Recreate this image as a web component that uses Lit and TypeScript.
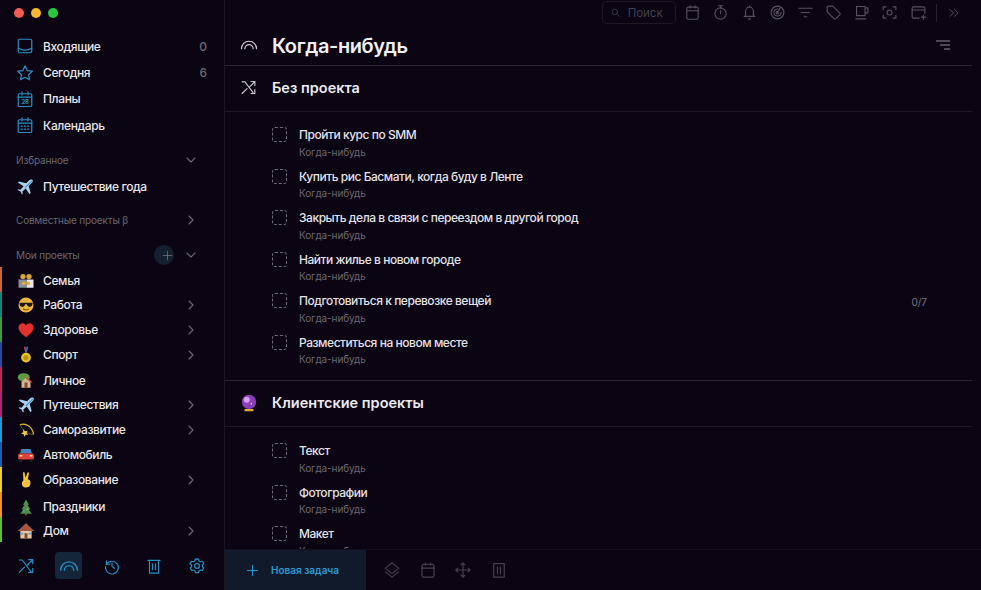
import { LitElement, html, css, svg } from "lit";
import { customElement } from "lit/decorators.js";

const ic = (body: unknown, size = 20, vb = 24) => html`<svg class="ico" width=${size} height=${size} viewBox="0 0 ${vb} ${vb}" fill="none" stroke="currentColor" stroke-width="1.6" stroke-linecap="round" stroke-linejoin="round">${body}</svg>`;

const I = {
  inbox: svg`<rect x="3" y="3" width="18" height="18" rx="2"/><path d="M3 15c3 0 3 2.500 9 2.500S18 15 21 15"/>`,
  star: svg`<path d="M12 2.500l2.900 6.300 6.900.8-5.100 4.700 1.400 6.800-6.100-3.400-6.100 3.400 1.400-6.800L2.200 9.600l6.900-.8z"/>`,
  plans: svg`<rect x="3" y="5" width="18" height="17" rx="1.500"/><path d="M3 9.500h18M8 2.500v4M16 2.500v4"/><text x="12" y="19" font-size="8" text-anchor="middle" fill="currentColor" stroke="none" font-family="Inter" font-weight="700">28</text>`,
  cal: svg`<rect x="3" y="5" width="18" height="17" rx="1.500"/><path d="M3 9.500h18M8 2.500v4M16 2.500v4M7 13.500h1.500M11.200 13.500h1.500M15.500 13.500H17M7 17.500h1.500M11.200 17.500h1.500M15.500 17.500H17"/>`,
  calPlain: svg`<rect x="4" y="4.500" width="16" height="17" rx="2"/><path d="M4 9.500h16M8.500 2.500v3M15.500 2.500v3"/>`,
  chevD: svg`<path d="M6 9l6 6 6-6"/>`,
  chevR: svg`<path d="M9 6l6 6-6 6"/>`,
  plus: svg`<path d="M12 4v16M4 12h16"/>`,
  shuffle: svg`<path d="M3 4l4 0 12 16M21 20.500h-5.500M21 20.500V15M21 3.500h-5.500M21 3.500V9M21 3.500l-7.500 7.500M3 20.500l7-7"/>`,
  arcs: svg`<path d="M2 17a10 10 0 0 1 20 0M6.500 17a5.500 5.500 0 0 1 11 0"/>`,
  history: svg`<path d="M4.500 5v4.500H9"/><path d="M4.800 9.500A8.500 8.500 0 1 1 3.500 13"/><path d="M12 8v4.500l3.500 2.500"/>`,
  trash: svg`<path d="M4 4.500h16M6 4.500V21.500h12V4.500M10 9v8M14 9v8"/>`,
  gear: svg`<path d="M12 2.500l2 .3.800 2.500 1.700 1 2.600-.6 1.900 3.200-1.800 1.900v2l1.800 1.900-1.900 3.200-2.600-.6-1.700 1-.8 2.500h-4l-.8-2.500-1.700-1-2.600.6-1.900-3.200 1.800-1.900v-2L2.700 8.900l1.900-3.200 2.600.6 1.700-1 .8-2.500z"/><circle cx="12" cy="12" r="3.200"/>`,
  search: svg`<circle cx="10.500" cy="10.500" r="6"/><path d="M15 15l5.500 5.500"/>`,
  timer: svg`<circle cx="12" cy="13.500" r="8"/><path d="M9 2.500h6M12 2.500v3M12 9.500v4h0"/>`,
  bell: svg`<path d="M6.500 17.500V10a5.500 5.500 0 0 1 11 0v7.500M4.500 17.500h15M10.500 21h3M12 2.500v2"/>`,
  radar: svg`<path d="M12 3a9 9 0 1 0 9 9"/><path d="M12 7a5 5 0 1 0 5 5"/><path d="M12 3c5 0 9 4 9 9M12 10.500a1.800 1.800 0 1 0 1.800 1.800M12 12l3.500-6"/>`,
  filter: svg`<path d="M2.500 6h19M6.500 12h11M10 18h4"/>`,
  tag: svg`<path d="M3 4.500A1.500 1.500 0 0 1 4.500 3H11l10 10a1.500 1.500 0 0 1 0 2l-6 6a1.500 1.500 0 0 1-2 0L3 11z"/>`,
  cup: svg`<path d="M5 3.500h12v13H5zM17 5.500h4v7h-4M4 21h14"/>`,
  focus: svg`<path d="M3 8V4h4M17 4h4v4M21 16v4h-4M7 20H3v-4"/><circle cx="12" cy="12" r="3.500"/>`,
  addWin: svg`<path d="M13 20H5a2 2 0 0 1-2-2V6a2 2 0 0 1 2-2h14a2 2 0 0 1 2 2v7M3 8.500h18M19 15.500v6M16 18.500h6"/>`,
  dblR: svg`<path d="M5 6l6 6-6 6M13 6l6 6-6 6"/>`,
  sortLines: svg`<path d="M2 6h20M8 12h14M14 18h8"/>`,
  layers: svg`<path d="M12 2.500l9 7-9 7-9-7zM3 14.500l9 7 9-7"/>`,
  move: svg`<path d="M12 2.500v19M2.500 12h19M9.500 5L12 2.500 14.500 5M9.500 19l2.500 2.500 2.500-2.500M5 9.500L2.500 12 5 14.500M19 9.500l2.500 2.500-2.500 2.500"/>`,
  bin: svg`<path d="M5 3.500h14v18H5zM10 8v9M14 8v9"/>`,
};

const emoji: Record<string, unknown> = {
  plane: svg`<path d="M22 2.500c-1.500-1.200-3.500-.5-5 1L13.500 7 4 4.500 2.500 6l7.500 5-4 4.500-3-.5L2 16l4 2 2 4 1-1-.5-3 4.500-4 5 7.500 1.500-1.500L17 10.500l3.500-3.500c1.500-1.500 2.700-3.300 1.500-4.500z" fill="#a9d0ee"/><path d="M20.500 3.500l-9 9 1 1 9-9z" fill="#3f8fd0"/>`,
  family: svg`<circle cx="8" cy="6" r="3.500" fill="#d9a63a"/><circle cx="16" cy="6" r="3.500" fill="#d9a63a"/><rect x="2" y="10" width="11" height="11" fill="#8a8f99"/><rect x="13" y="10" width="9" height="11" fill="#e8e8ee"/><circle cx="9" cy="15" r="2.500" fill="#e0b040"/><circle cx="15" cy="15" r="2.500" fill="#e0b040"/>`,
  cool: svg`<circle cx="12" cy="12" r="10" fill="#f0b73c"/><path d="M3 9h18l-1 4c-2 2-5 2-6 0l-1-2h-2l-1 2c-1 2-4 2-6 0z" fill="#1a1a1a"/><path d="M8 17c3 2 6 2 8 0" stroke="#7a4a10" stroke-width="1.400" fill="none"/>`,
  heart: svg`<path d="M12 21.500C5 16 2 12.500 2 8.500A5.500 5.500 0 0 1 12 5.500 5.500 5.500 0 0 1 22 8.500c0 4-3 7.500-10 13z" fill="#e0312f"/>`,
  medal: svg`<path d="M9 1h2.500l1.500 8H11z" fill="#c43b3b"/><path d="M15 1h-2.500L12 9h1z" fill="#4a6fd0"/><circle cx="12" cy="15.500" r="6.500" fill="#e8c62f"/><circle cx="12" cy="15.500" r="3.500" fill="#b99616"/>`,
  hut: svg`<ellipse cx="9" cy="7" rx="8" ry="5.500" fill="#5f9a45"/><path d="M6 21v-8l6-5 6 5v8z" fill="#d8b692"/><rect x="10" y="14" width="4" height="7" fill="#7a4f32"/><path d="M12 6l9 8h-3l-6-5z" fill="#c45a4a"/>`,
  comet: svg`<path d="M4 5c8-3 17 3 18 13" stroke="#e6b733" stroke-width="1.600" fill="none"/><path d="M4 5c3 6 9 13 18 13" stroke="#8a6a1c" stroke-width="1" fill="none"/><path d="M8 11l2.500 2.500L14 13l-1.200 3 2.300 2.500-3.300-.4-2 3-1-3.300-3.500-1 3-1.800z" fill="#f4cd45"/>`,
  car: svg`<path d="M6 4h12l2 6H4z" fill="#4a7fc0"/><rect x="1.500" y="10" width="21" height="8" rx="2" fill="#e0403c"/><rect x="3" y="18" width="4" height="3" fill="#222"/><rect x="17" y="18" width="4" height="3" fill="#222"/><rect x="3.500" y="12" width="3.500" height="2" fill="#fbe28a"/><rect x="17" y="12" width="3.500" height="2" fill="#fbe28a"/>`,
  peace: svg`<path d="M8 1.500l2 0 1.500 7.500L14 2h2.200l-1.700 9c2.500.5 3.500 2 3.500 5 0 4-2.500 6-6 6s-5.500-2-5.500-5c0-2 .5-3 2-4.500z" fill="#f4c23d"/>`,
  tree: svg`<path d="M12 2l4 7h-2l4 6h-2.500l4 6H4.500l4-6H6l4-6H8z" fill="#4b8f4a"/><rect x="10.500" y="20" width="3" height="3" fill="#7a4f32"/><circle cx="11" cy="10" r="1" fill="#e04040"/><circle cx="14" cy="15" r="1" fill="#ecc53a"/><circle cx="9" cy="17" r="1" fill="#5aa0e0"/>`,
  house: svg`<path d="M12 2L1.500 12h3v10h15V12h3z" fill="#e8c7a0"/><path d="M12 2L1.500 12h21z" fill="#a8553f"/><rect x="10" y="15" width="4" height="7" fill="#7a4f32"/><rect x="5.500" y="14" width="3" height="3" fill="#68a8d8"/><rect x="15.500" y="14" width="3" height="3" fill="#68a8d8"/>`,
  ball: svg`<circle cx="12" cy="10.500" r="9.500" fill="#8a3fb8"/><circle cx="9" cy="7.500" r="4" fill="#d89cf0"/><circle cx="15" cy="13" r="1" fill="#f5e0ff"/><path d="M6 20h12v3H6z" fill="#e3a83a"/>`,
};

const emo = (k: string, size = 18) => html`<svg class="emo" width=${size} height=${size} viewBox="0 0 24 24">${emoji[k]}</svg>`;

const NAV = [
  ["inbox", "Входящие", "0"],
  ["star", "Сегодня", "6"],
  ["plans", "Планы", ""],
  ["cal", "Календарь", ""],
] as const;

const PROJECTS = [
  { e: "family", n: "Семья", c: "#c8683a", more: false, cls: "low" },
  { e: "cool", n: "Работа", c: "#14857a", more: true, cls: "" },
  { e: "heart", n: "Здоровье", c: "#3f9a45", more: true, cls: "" },
  { e: "medal", n: "Спорт", c: "#2a4aa0", more: true, cls: "" },
  { e: "hut", n: "Личное", c: "#c0245a", more: false, cls: "low" },
  { e: "plane", n: "Путешествия", c: "#b81f72", more: true, cls: "" },
  { e: "comet", n: "Саморазвитие", c: "#1e9ad8", more: true, cls: "" },
  { e: "car", n: "Автомобиль", c: "#1a5fb0", more: false, cls: "" },
  { e: "peace", n: "Образование", c: "#ecd02f", more: true, cls: "" },
  { e: "tree", n: "Праздники", c: "#f0902a", more: false, cls: "lower" },
  { e: "house", n: "Дом", c: "#5cc03a", more: true, cls: "low" },
];

const TOOLS = ["calPlain", "timer", "bell", "radar", "filter", "tag", "cup", "focus", "addWin"] as const;

@customElement("app-root")
export class AppRoot extends LitElement {
  static styles = css`
    :host { display: block; width: 981px; height: 590px; overflow: hidden; background: #0a0413; color: #eceaf0; font-family: Inter, "Noto Sans", sans-serif; }
    * { box-sizing: border-box; }
    svg { display: block; flex: none; }
    .app { display: flex; height: 590px; }
    .side { width: 225px; flex: none; border-right: 1px solid #1b1622; display: flex; flex-direction: column; height: 590px; }
    .lights { display: flex; gap: 7px; padding: 8px 0 0 14px; height: 33px; }
    .lights i { width: 10px; height: 10px; border-radius: 50%; }
    .row { display: flex; align-items: center; height: 26.400px; padding-left: 16px; font-size: 12px; letter-spacing: -0.37px; font-weight: 500; color: #e9e7ec; }
    .row .ico { color: #2b8fc4; margin-right: 9px; width: 18px; height: 18px; }
    .row .count { margin-left: auto; margin-right: 17px; color: #6f6b76; font-size: 12px; letter-spacing: 0; }
    .group { display: flex; align-items: center; height: 24px; padding-left: 16px; padding-right: 25px; font-size: 10px; letter-spacing: -0.15px; color: #6b6772; }
    .group .ico { margin-left: auto; color: #6d6974; }
    .g1 { margin-top: 9px; }
    .g2 { margin-top: 8.500px; }
    .g3 { margin-top: 11px; }
    .addbtn { width: 20px; height: 20px; border-radius: 50%; background: #14202f; color: #2fa2dc; display: flex; align-items: center; justify-content: center; margin-left: auto; margin-right: 9px; }
    .addbtn + .ico { margin-left: 0; }
    .fav .emo { margin-right: 9px; }
    .row.fav { margin-top: 2px; }
    .proj { display: flex; align-items: center; height: 25px; padding-left: 15px; padding-right: 25px; font-size: 12px; letter-spacing: -0.37px; font-weight: 500; color: #e9e7ec; border-left: 2px solid; }
    .proj .emo { margin-right: 8px; }
    .proj .ico { margin-left: auto; color: #6d6974; }
    .proj.low { padding-top: 2px; }
    .proj.lower { padding-top: 4px; }
    .side-foot { margin-top: auto; height: 46px; display: flex; align-items: center; justify-content: space-between; padding: 0 13.500px 3px 12.500px; }
    .side-foot span { width: 27px; height: 27px; border-radius: 4px; display: flex; align-items: center; justify-content: center; color: #2b8fc4; }
    .side-foot span.on { background: #14273a; }
    .main { flex: 1; min-width: 0; display: flex; flex-direction: column; height: 590px; }
    .tools { height: 25px; display: flex; align-items: center; justify-content: flex-end; padding-right: 20px; color: #55515c; gap: 11.200px; flex: none; }
    .search { width: 74px; height: 23px; border: 1px solid #1d1925; border-radius: 5px; display: flex; align-items: center; padding-left: 7px; gap: 7px; font-size: 11.500px; color: #45414c; margin-right: -2.700px; }
    .sep { width: 1px; height: 18px; background: #25212c; margin: 0 -1px 0 -2px; }
    .title { height: 41px; margin-right: 9px; display: flex; align-items: center; padding: 1px 21px 0 15px; border-bottom: 1px solid #2a2630; font-size: 20px; letter-spacing: -0.4px; font-weight: 600; flex: none; color: #f2f0f4; }
    .title .ico { margin: 0 14px 2px 0; color: #d0cdd4; }
    .title .ico:last-child { margin: 0 0 2px auto; color: #8f8b95; }
    .scroll { flex: 1; min-height: 0; overflow: hidden; margin-right: 9px; }
    .sec { height: 46px; display: flex; align-items: center; padding: 0 0 2px 15px; font-size: 14.500px; font-weight: 600; border-bottom: 1px solid #1e1a25; color: #ecebef; }
    .sec .ico { margin-right: 15px; color: #c8c5cc; }
    .sec .emo { margin-right: 14px; }
    .list { padding-top: 5px; }
    .list.first { border-bottom: 1px solid #2a2630; height: 269px; }
    .list.second { padding-top: 6px; }
    .task { height: 41.500px; padding: 10px 45px 0 47px; display: flex; gap: 12px; }
    .box { width: 15px; height: 15px; border: 1px dashed #6f6b76; border-radius: 3px; flex: none; }
    .tt { font-size: 12px; letter-spacing: -0.46px; font-weight: 500; line-height: 16px; color: #e4e2e8; }
    .ts { font-size: 10px; letter-spacing: -0.1px; line-height: 14px; margin-top: 1.500px; color: #6b6772; }
    .tbody { flex: 1; }
    .sub { font-size: 10px; color: #7a7681; margin-top: 3px; }
    .foot { height: 41px; flex: none; display: flex; align-items: center; border-top: 1px solid #141019; background: #0a0413; }
    .new { width: 141px; height: 100%; background: #111a2b; display: flex; align-items: center; gap: 11px; padding-left: 20px; font-size: 10px; font-weight: 600; color: #2b9ad4; }
    .acts { display: flex; align-items: center; gap: 17.500px; padding-left: 17px; color: #45414c; }
  `;

  render() {
    return html`<div class="app">
      <aside class="side">
        <div class="lights"><i style="background:#f15b55"></i><i style="background:#f5b82e"></i><i style="background:#2ac83f"></i></div>
        ${NAV.map(([i, n, c]) => html`<div class="row">${ic((I as any)[i], 18)}<span>${n}</span>${c ? html`<span class="count">${c}</span>` : ""}</div>`)}
        <div class="group g1"><span>Избранное</span>${ic(I.chevD, 16)}</div>
        <div class="row fav">${emo("plane")}<span>Путешествие года</span></div>
        <div class="group g2"><span>Совместные проекты β</span>${ic(I.chevR, 16)}</div>
        <div class="group g3"><span>Мои проекты</span><div class="addbtn">${ic(I.plus, 13)}</div>${ic(I.chevD, 16)}</div>
        <div class="projects">
          ${PROJECTS.map((p) => html`<div class="proj ${p.cls}" style="border-left-color:${p.c}">${emo(p.e)}<span>${p.n}</span>${p.more ? ic(I.chevR, 16) : ""}</div>`)}
        </div>
        <div class="side-foot">
          <span>${ic(I.shuffle, 18)}</span>
          <span class="on">${ic(I.arcs, 20)}</span>
          <span>${ic(I.history, 18)}</span>
          <span>${ic(I.trash, 18)}</span>
          <span>${ic(I.gear, 18)}</span>
        </div>
      </aside>
      <main class="main">
        <div class="tools">
          <div class="search">${ic(I.search, 11)}<span>Поиск</span></div>
          ${TOOLS.map((t) => ic((I as any)[t], 17))}
          <div class="sep"></div>
          ${ic(I.dblR, 14)}
        </div>
        <div class="title">${ic(I.arcs, 18)}<span>Когда-нибудь</span>${ic(I.sortLines, 16)}</div>
        <div class="scroll">
          <div class="sec">${ic(I.shuffle, 17)}<span>Без проекта</span></div>
          <div class="list first">
            ${["Пройти курс по SMM", "Купить рис Басмати, когда буду в Ленте", "Закрыть дела в связи с переездом в другой город", "Найти жилье в новом городе", "Подготовиться к перевозке вещей", "Разместиться на новом месте"].map((t) => this.task(t))}
          </div>
          <div class="sec">${emo("ball", 18)}<span>Клиентские проекты</span></div>
          <div class="list second">${["Текст", "Фотографии", "Макет"].map((t) => this.task(t))}</div>
        </div>
        <div class="foot">
          <div class="new">${ic(I.plus, 15)}<span>Новая задача</span></div>
          <div class="acts">${ic(I.layers, 18)}${ic(I.calPlain, 18)}${ic(I.move, 18)}${ic(I.bin, 18)}</div>
        </div>
      </main>
    </div>`;
  }

  task(t: string) {
    return html`<div class="task"><div class="box"></div><div class="tbody"><div class="tt">${t}</div><div class="ts">Когда-нибудь</div></div>${t.startsWith("Подготовиться") ? html`<div class="sub">0/7</div>` : ""}</div>`;
  }
}
